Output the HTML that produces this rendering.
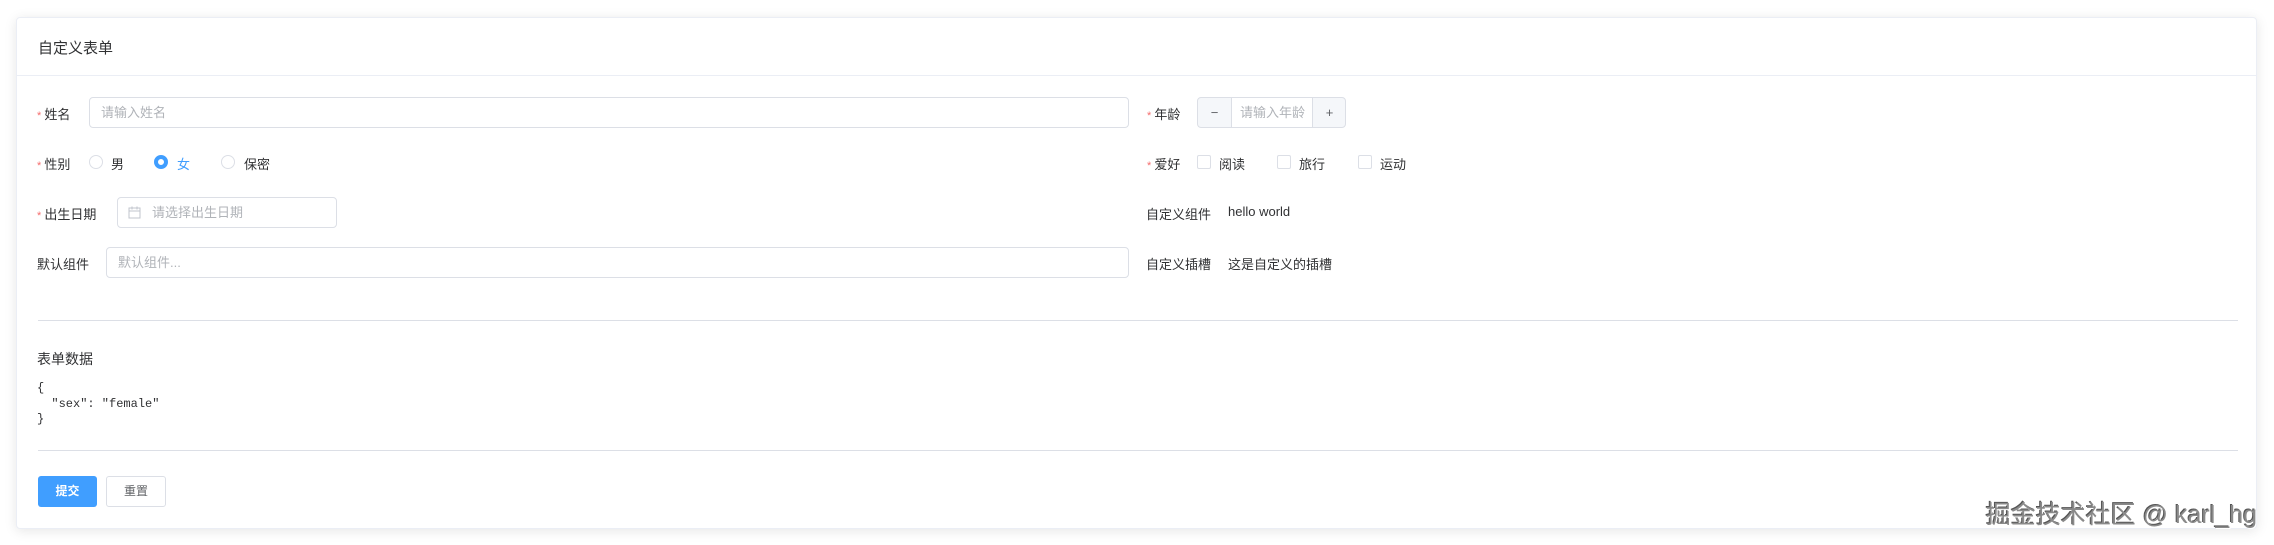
<!DOCTYPE html>
<html><head><meta charset="utf-8"><style>
*{box-sizing:border-box;margin:0;padding:0}
body{width:2274px;height:545px;background:#fff;font-family:"Liberation Sans","Noto Sans CJK SC",sans-serif;font-size:13px;color:#303133;position:relative;overflow:hidden}
.card{position:absolute;left:16px;top:17px;width:2241px;height:512px;border:1px solid #ebeef5;border-radius:4px;box-shadow:0 2px 12px rgba(0,0,0,.1);background:#fff}
.hd{position:absolute;left:0;top:0;right:0;height:58px;border-bottom:1px solid #ebeef5}
.a{position:absolute;white-space:nowrap}
.star{color:#f56c6c;font-size:11px}
.inp{position:absolute;border:1px solid #dcdfe6;border-radius:4px;height:31px;background:#fff;color:#b0b3b8;font-size:13px;line-height:29px;padding-left:11px}
.radio{position:absolute;width:14px;height:14px;border:1px solid #dcdfe6;border-radius:50%}
.cb{position:absolute;width:14px;height:14px;border:1px solid #dcdfe6;border-radius:2px}
.line{position:absolute;height:1px;background:#dcdfe6}
</style></head><body>
<div class="card">
<div class="hd"><div class="a" style="left:21px;top:19px;font-size:15px">自定义表单</div></div>
</div>
<div class="a" style="left:37px;top:104px"><span class="star">* </span>姓名</div>
<div class="inp" style="left:89px;top:97px;width:1040px">请输入姓名</div>
<div class="a" style="left:1147px;top:104px"><span class="star">* </span>年龄</div>
<div class="inp" style="left:1197px;top:97px;width:149px;padding:0;background:#f5f7fa">
 <div class="a" style="left:0;top:0;width:33px;height:29px;text-align:center;color:#606266">−</div>
 <div class="a" style="left:33px;top:0;width:82px;height:29px;background:#fff;border-left:1px solid #dcdfe6;border-right:1px solid #dcdfe6;padding-left:8px;overflow:hidden">请输入年龄</div>
 <div class="a" style="left:115px;top:0;width:33px;height:29px;text-align:center;color:#606266">+</div>
</div>
<div class="a" style="left:37px;top:154px"><span class="star">* </span>性别</div>
<div class="radio" style="left:89px;top:155px"></div><div class="a" style="left:111px;top:154px">男</div>
<div class="radio" style="left:154px;top:155px;border:4px solid #409eff;background:#fff"></div><div class="a" style="left:177px;top:154px;color:#409eff">女</div>
<div class="radio" style="left:221px;top:155px"></div><div class="a" style="left:244px;top:154px">保密</div>
<div class="a" style="left:1147px;top:154px"><span class="star">* </span>爱好</div>
<div class="cb" style="left:1197px;top:155px"></div><div class="a" style="left:1219px;top:154px">阅读</div>
<div class="cb" style="left:1277px;top:155px"></div><div class="a" style="left:1299px;top:154px">旅行</div>
<div class="cb" style="left:1358px;top:155px"></div><div class="a" style="left:1380px;top:154px">运动</div>
<div class="a" style="left:37px;top:204px"><span class="star">* </span>出生日期</div>
<div class="inp" style="left:117px;top:197px;width:220px;padding-left:34px">请选择出生日期
<svg class="a" style="left:10px;top:8px" width="13" height="13" viewBox="0 0 13 13"><rect x="1" y="2" width="11" height="10" fill="none" stroke="#c0c4cc"/><path d="M1 5h11M4 0.5v3M9 0.5v3" stroke="#c0c4cc"/></svg></div>
<div class="a" style="left:1146px;top:204px">自定义组件</div>
<div class="a" style="left:1228px;top:204px">hello world</div>
<div class="a" style="left:37px;top:254px">默认组件</div>
<div class="inp" style="left:106px;top:247px;width:1023px">默认组件...</div>
<div class="a" style="left:1146px;top:254px">自定义插槽</div>
<div class="a" style="left:1228px;top:254px">这是自定义的插槽</div>
<div class="line" style="top:320px;left:38px;right:36px"></div>
<div class="a" style="left:37px;top:349px;font-size:14px">表单数据</div>
<pre class="a" style="left:37px;top:381px;font-family:'Liberation Mono',monospace;font-size:12px;line-height:15.5px;color:#303133;white-space:pre">{
  "sex": "female"
}</pre>
<div class="line" style="top:450px;left:38px;right:36px"></div>
<div class="a" style="left:38px;top:476px;width:59px;height:31px;background:#409eff;border-radius:3px;color:#fff;font-size:12px;line-height:31px;text-align:center;font-weight:bold">提交</div>
<div class="a" style="left:106px;top:476px;width:60px;height:31px;border:1px solid #dcdfe6;border-radius:3px;color:#606266;font-size:12px;line-height:29px;text-align:center">重置</div>
<div class="a" style="right:17px;top:495px;font-size:25px;color:#8a8a8a;text-shadow:1px 1px 0 #fff,-1px -1px 0 #555">掘金技术社区 @ karl_hg</div>
</body></html>
